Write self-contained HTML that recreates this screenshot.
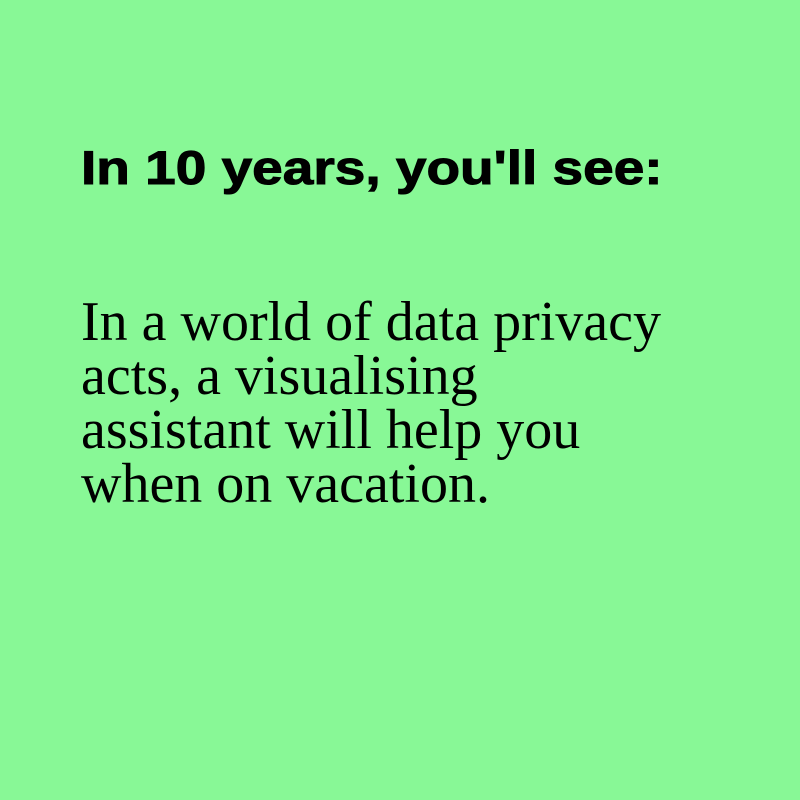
<!DOCTYPE html>
<html><head><style>
body{margin:0;width:800px;height:800px;background:#88f896;position:relative;overflow:hidden}
h1{position:absolute;left:81px;top:140px;margin:0;font:bold 47px/normal "Liberation Sans",sans-serif;color:#000;white-space:nowrap;transform:scaleX(1.17);transform-origin:0 0;-webkit-text-stroke:1px #000}
p{position:absolute;left:81px;top:295px;margin:0;width:700px;font:56px/54px "Liberation Serif",serif;color:#000;white-space:nowrap}
</style></head><body>
<h1>In 10 years, you'll see:</h1>
<p>In a world of data privacy<br>acts, a visualising<br>assistant will help you<br>when on vacation.</p>
</body></html>
